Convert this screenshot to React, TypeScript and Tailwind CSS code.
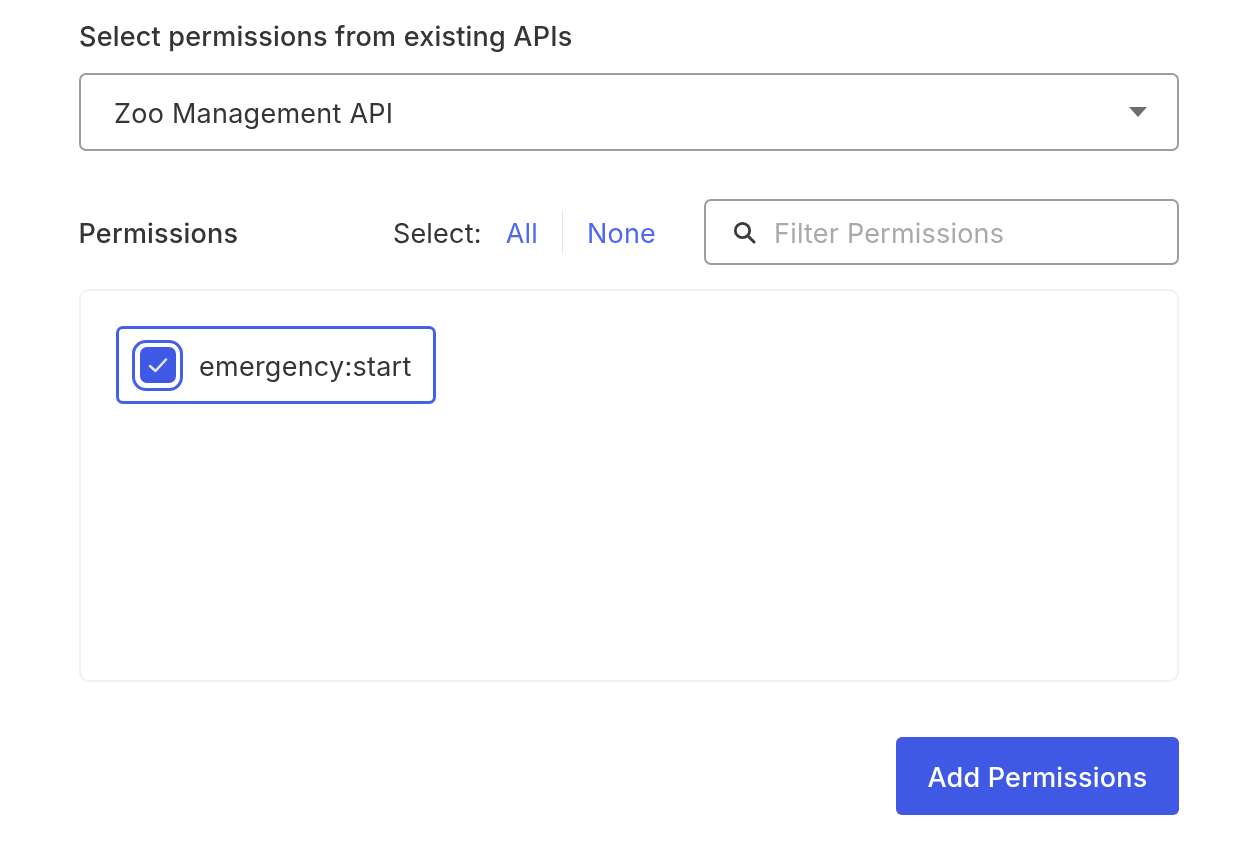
import React from "react";

export default function App() {
  return (
    <div className="w-[1248px] h-[860px] bg-white px-[79px] pt-[19px] font-['Inter',sans-serif] text-[#333538] tracking-[0.2px] overflow-hidden blur-[0.5px]">
      <div className="w-[1100px] flex flex-col">
        <div className="text-[27px] leading-[36px] font-medium tracking-[0.2px]">Select permissions from existing APIs</div>
        <div className="mt-[18px] h-[78px] border-2 border-[#9c9d9f] rounded-[7px] flex items-center justify-between pl-[33px] pr-[30px] text-[27px]">
          <span className="pt-[4px] tracking-[0.25px]">Zoo Management API</span>
          <span className="w-0 h-0 border-l-[9px] border-r-[9px] border-t-[10px] border-l-transparent border-r-transparent border-t-[#6b6d70]" />
        </div>
        <div className="mt-[48px] flex items-center h-[66px]">
          <div className="text-[27px] font-medium pt-[4px] -ml-[0.5px]">Permissions</div>
          <div className="ml-auto flex items-center text-[27px]">
            <span className="pt-[4px]">Select:</span>
            <span className="ml-[24px] text-[#4f68ee] pt-[4px]">All</span>
            <span className="mx-[24px] w-px h-[44px] bg-[#e3e4e6]" />
            <span className="text-[#4f68ee] pt-[4px]">None</span>
          </div>
          <div className="ml-[48px] w-[475px] h-[66px] border-2 border-[#9c9d9f] rounded-[7px] flex items-center pl-[27px] gap-[18px]">
            <svg width="23" height="23" viewBox="0 0 23 23" fill="none" className="text-[#3a3b3e] shrink-0">
              <circle cx="9.5" cy="9.5" r="7.2" stroke="currentColor" strokeWidth="2.8" />
              <path d="M15 15L21 21" stroke="currentColor" strokeWidth="3" strokeLinecap="round" />
            </svg>
            <span className="text-[27px] text-[#a8a9ab] pt-[4px]">Filter Permissions</span>
          </div>
        </div>
        <div className="mt-[24px] h-[393px] border-2 border-[#f0f1f2] rounded-[10px] p-[35px]">
          <div className="inline-flex items-center h-[78px] border-[3px] border-[#4460e6] rounded-[7px] pl-[13px] pr-[21px]">
            <span className="w-[51px] h-[51px] border-[3px] border-[#4460e6] rounded-[14px] flex items-center justify-center">
              <span className="w-[36px] h-[36px] bg-[#3f59e4] rounded-[7px] flex items-center justify-center">
                <svg width="22" height="22" viewBox="0 0 22 22" fill="none" className="text-[#e6e9fb]">
                  <path d="M3 12L8.5 17L19 5.5" stroke="currentColor" strokeWidth="2.5" strokeLinecap="round" strokeLinejoin="round" />
                </svg>
              </span>
            </span>
            <span className="ml-[16px] text-[27px] pt-[4px] tracking-[0.25px]">emergency:start</span>
          </div>
        </div>
        <div className="mt-[55px] flex justify-end">
          <button className="w-[283px] h-[78px] bg-[#3f59e4] rounded-[6px] text-white text-[27px] font-medium pt-[4px]">Add Permissions</button>
        </div>
      </div>
    </div>
  );
}
